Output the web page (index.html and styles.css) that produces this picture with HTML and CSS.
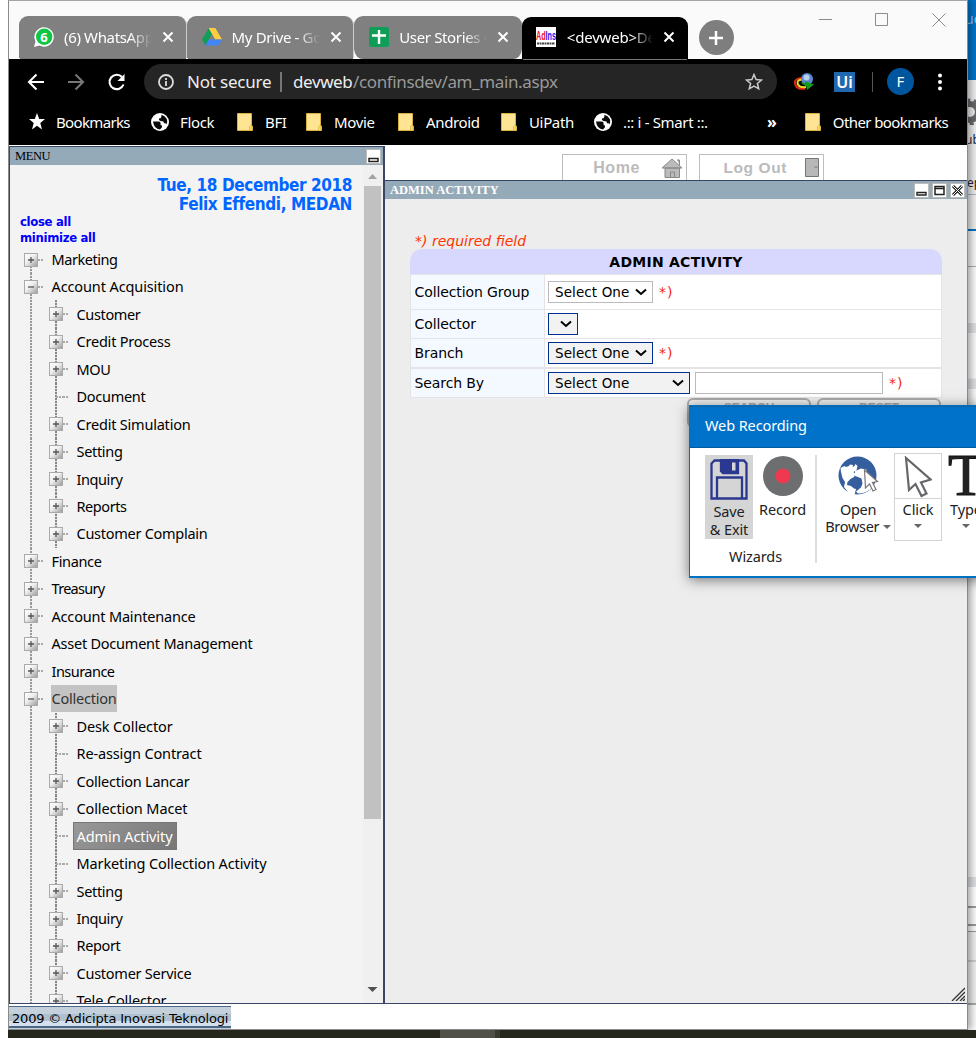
FILE: index.html
```html
<!DOCTYPE html>
<html lang="en">
<head>
<meta charset="utf-8">
<title>Admin Activity</title>
<link rel="stylesheet" href="styles.css">
</head>
<body>
<svg width="0" height="0" class="defs">
  <defs>
    <linearGradient id="box" x1="0" y1="0" x2="1" y2="1"><stop offset="0" stop-color="#fff"/><stop offset=".45" stop-color="#eee"/><stop offset="1" stop-color="#999"/></linearGradient>
    <symbol id="x" viewBox="0 0 12 12"><path d="M1.5 1.5l9 9M10.500 1.500l-9 9" stroke="#fff" stroke-width="2"/></symbol>
    <symbol id="folder" viewBox="0 0 16 18"><path d="M.5 .5h14v12l1 .500v4.500h-15z" fill="#ffe494" stroke="#d9b23c"/><path d="M12.500 17.500v-4q1.500-2 2.500 0v4z" fill="#ffda66" stroke="#d9b23c" stroke-width=".7"/></symbol>
    <symbol id="globe" viewBox="0 0 18 18"><circle cx="9" cy="9" r="9" fill="#fff"/><path d="M2 8.500h5.500q2.500.3 2 2.500-.2 1.500 1.500 1.500v1.800l-2 2.200Q3 16 2 8.500zM10.500 1.800l-.2 2.200q-.5 1.500-2.300 1.500v1.500q1.500 1.500 3.500 1.300 1.500.2 1.500 2h1.500q1 0 1.500 1.200Q17.500 4.500 10.500 1.800z" fill="#0a0a0a"/></symbol>
    <symbol id="chev" viewBox="0 0 12 8"><path d="M1 1.500l5 4.500 5-4.500" fill="none" stroke="#000" stroke-width="2"/></symbol>
    <symbol id="plus" viewBox="0 0 14 14"><rect x=".5" y=".5" width="13" height="13" fill="url(#box)" stroke="#aaa"/><path d="M4 7h6M7 4v6" stroke="#555" stroke-width="1.300"/></symbol>
    <symbol id="minus" viewBox="0 0 14 14"><rect x=".5" y=".5" width="13" height="13" fill="url(#box)" stroke="#aaa"/><path d="M4 7h6" stroke="#555" stroke-width="1.300"/></symbol>
  </defs>
</svg>
<div class="desktop">
  <div class="behind">
    <div class="b-blue">uc</div>
    <div class="b-tools">
      <svg width="26" height="28" viewBox="0 0 26 28"><circle cx="13" cy="15" r="8" fill="none" stroke="#66676c" stroke-width="6"/><circle cx="13" cy="15" r="12" fill="none" stroke="#66676c" stroke-width="3" stroke-dasharray="4 3.500"/></svg>
      <span class="b-t1">ub</span><span class="b-t2">ep</span>
    </div>
    <div class="b-rule"></div><div class="b-blank"></div><div class="b-grey"></div><div class="b-mid"></div><div class="b-grey"></div><div class="b-long"></div><div class="b-grey"></div><div class="b-rows"></div><div class="b-last"></div>
  </div>
  <div class="taskbar"><span></span></div>

  <div class="chrome">
    <div class="tabstrip">
      <div class="tab">
        <svg width="20" height="20" viewBox="0 0 20 20"><path d="M0 20L1.500 14.500A9.700 9.700 0 1 1 5.500 18.500z" fill="#fff"/><circle cx="10.200" cy="9.800" r="8.200" fill="#10c645"/><text x="6.300" y="14.500" class="badge">6</text></svg>
        <span class="title">(6) WhatsApp</span><svg width="12" height="12"><use href="#x"/></svg>
      </div>
      <div class="tab">
        <svg width="20" height="18" viewBox="0 0 20 18"><path d="M6.700 0L0 11.500 3.500 17.500 10 6z" fill="#109d58"/><path d="M6.700 0h6.600L20 11.500h-6.800z" fill="#ffcd40"/><path d="M6.800 11.500H20l-3.500 6h-13z" fill="#4285f4"/></svg>
        <span class="title">My Drive - Go</span><svg width="12" height="12"><use href="#x"/></svg>
      </div>
      <div class="tab last">
        <svg width="20" height="20" viewBox="0 0 20 20"><rect width="20" height="20" rx="2" fill="#109d58"/><path d="M10 3v14M3 8.500h14" stroke="#fff" stroke-width="2.400"/></svg>
        <span class="title">User Stories C</span><svg width="12" height="12"><use href="#x"/></svg>
      </div>
      <div class="tab active">
        <svg width="20" height="20" viewBox="0 0 20 20"><rect width="20" height="20" fill="#fff"/><text x="0" y="13" class="adins" textLength="20" lengthAdjust="spacingAndGlyphs"><tspan fill="#f01020">Ad</tspan><tspan fill="#2020f0">Ins</tspan></text><path d="M1 16.500h18" stroke="#444" stroke-width="2" stroke-dasharray="2 .5"/></svg>
        <span class="title dark">&lt;devweb&gt;De</span><svg width="12" height="12"><use href="#x"/></svg>
      </div>
      <div class="newtab"><svg width="16" height="16"><path d="M8 1v14M1 8h14" stroke="#fff" stroke-width="2.500"/></svg></div>
      <div class="winbtns">
        <svg width="128" height="16" fill="none" stroke="#8c8c8c"><path d="M0 7.500h13M57 1.500h11.500v12H56.500v-12zM113.500 1.500l13 13M126.500 1.500l-13 13"/></svg>
      </div>
    </div>
    <div class="toolbar">
      <svg width="110" height="20" viewBox="0 0 110 20" fill="none" stroke-width="2.100"><path d="M17 10H2M9.500 2.500L2 10l7.500 7.500" stroke="#fff"/><path d="M41 10h15M48.500 2.500L56 10l-7.500 7.500" stroke="#777"/><path d="M95 5A7.200 7.200 0 1 0 96.500 12.500" stroke="#fff"/><path d="M97.500 2v7h-7z" fill="#fff"/></svg>
      <div class="omnibox">
        <svg width="16" height="16" fill="none" stroke="#ddd" stroke-width="1.800"><circle cx="8" cy="8" r="7"/><path d="M8 7v5M8 4v2"/></svg>
        <span class="ns">Not secure</span><i></i><span class="host">devweb</span><span class="path">/confinsdev/am_main.aspx</span>
        <svg class="star" width="18" height="18" viewBox="0 0 18 18"><path d="M9 1.500l2.100 5 5.400.5-4.100 3.500 1.300 5.300L9 13l-4.700 2.800 1.300-5.300L1.500 7l5.400-.5z" fill="none" stroke="#ccc" stroke-width="1.500"/></svg>
      </div>
      <svg class="ext" width="20" height="18" viewBox="0 0 20 18"><path d="M7 5Q-1 6 1.500 12q2 5 10 3.500" fill="none" stroke="#e32518" stroke-width="2"/><path d="M8 6.500Q2 7 4 11.500q2 3.500 8 2.500" fill="none" stroke="#e7de27" stroke-width="2"/><circle cx="13" cy="6" r="6" fill="#5d87d0"/><circle cx="12.500" cy="4.500" r="3" fill="#b8d2ee"/><path d="M6 9.500l5 .5V8l9 3.500-7 5.500-.5-3.500z" fill="#149a1d"/></svg>
      <span class="ui">Ui</span><span class="sep"></span><span class="avatar">F</span>
      <svg class="dots" width="4" height="18"><circle cx="2" cy="2.500" r="2" fill="#fff"/><circle cx="2" cy="9" r="2" fill="#fff"/><circle cx="2" cy="15.500" r="2" fill="#fff"/></svg>
    </div>
    <div class="bookmarks">
      <svg width="18" height="17" viewBox="0 0 18 17"><path d="M9 0l2.200 6H17l-4.700 4 1.700 6.500L9 12.700 4 16.500 5.700 10 1 6h5.800z" fill="#fff"/></svg><span class="w-bm">Bookmarks</span>
      <svg width="18" height="18"><use href="#globe"/></svg><span class="w-fl">Flock</span>
      <svg width="16" height="18"><use href="#folder"/></svg><span class="w-bfi">BFI</span>
      <svg width="16" height="18"><use href="#folder"/></svg><span class="w-mov">Movie</span>
      <svg width="16" height="18"><use href="#folder"/></svg><span class="w-and">Android</span>
      <svg width="16" height="18"><use href="#folder"/></svg><span class="w-uip">UiPath</span>
      <svg width="18" height="18"><use href="#globe"/></svg><span class="w-sm">.:: i - Smart ::.</span>
      <b>»</b><i></i>
      <svg width="16" height="18"><use href="#folder"/></svg><span class="w-oth">Other bookmarks</span>
    </div>

    <div class="page">
      <div class="columns">
        <div class="menu">
          <div class="bar">MENU<svg width="15" height="15"><rect x=".5" y=".5" width="14" height="14" fill="#fff" stroke="#bbb"/><path d="M3 9.500h9v3H3z" fill="none" stroke="#222" stroke-width="1.500"/></svg></div>
          <div class="menu-body">
            <div class="menu-content">
              <div class="who"><span class="date">Tue, 18 December 2018</span><br><span class="user">Felix Effendi, MEDAN</span></div>
              <div class="links"><a>close all</a><br><a>minimize all</a></div>
              <div class="tree" id="tree"></div>
            </div>
            <div class="scroll"><svg width="17" height="17"><path d="M4 11h9L8.500 6z" fill="#a3a3a3"/></svg><div class="thumb"></div><svg width="17" height="17"><path d="M3.500 5h10L8.500 10z" fill="#505050"/></svg></div>
          </div>
        </div>
        <div class="main">
          <div class="top">
            <div class="topbtn home"><span>Home</span><svg width="22" height="20" fill="#bbb" stroke="#888"><path d="M4 10h14.500v9.500H4zM1 10L11 1l10 9zM9.500 19.500v-5.500h4v5.500M16 2h2.500v5"/></svg></div>
            <div class="topbtn out"><span>Log Out</span><svg width="15" height="19" fill="#b8b8b8" stroke="#777"><path d="M.5.5h13v18H.5zM9.500 9h3"/></svg></div>
          </div>
          <div class="panel">
            <div class="bar white">ADMIN ACTIVITY
              <span class="ctl"><svg width="15" height="15"><rect x=".5" y=".5" width="14" height="14" fill="#fff" stroke="#bbb"/><path d="M3 9.500h9v2.500H3z" fill="none" stroke="#222" stroke-width="1.400"/></svg>
              <svg width="15" height="15"><rect x=".5" y=".5" width="14" height="14" fill="#fff" stroke="#bbb"/><path d="M3 3.500h9v8H3zM3 5.500h9" fill="none" stroke="#222" stroke-width="1.500"/></svg>
              <svg width="15" height="15"><rect x=".5" y=".5" width="14" height="14" fill="#fff" stroke="#bbb"/><path d="M3 3l9 9M12 3l-9 9" stroke="#222" stroke-width="3"/><path d="M3 3l9 9M12 3l-9 9" stroke="#fff"/></svg></span>
            </div>
            <div class="panel-body">
              <div class="req">*) required field</div>
              <div class="form">
                <div class="form-head">ADMIN ACTIVITY</div>
                <div class="row r1"><label class="l1">Collection Group</label><div><span class="sel plain">Select One<svg width="12" height="8"><use href="#chev"/></svg></span><em>*)</em></div></div>
                <div class="row r2"><label>Collector</label><div><span class="sel small"><svg width="12" height="8"><use href="#chev"/></svg></span></div></div>
                <div class="row r3"><label>Branch</label><div><span class="sel">Select One<svg width="12" height="8"><use href="#chev"/></svg></span><em>*)</em></div></div>
                <div class="row r4"><label>Search By</label><div><span class="sel wide">Select One<svg width="12" height="8"><use href="#chev"/></svg></span><span class="input"></span><em>*)</em></div></div>
              </div>
              <div class="actions"><span>SEARCH</span><span>RESET</span></div>
              <svg class="grip" width="14" height="14" stroke="#333" stroke-width="1.300"><path d="M1 14L14 1M5 14l9-9M9 14l5-5M12 14l2-2"/></svg>
            </div>
          </div>
        </div>
      </div>
      <div class="footer"><span>2009 © Adicipta Inovasi Teknologi</span></div>
    </div>
  </div>

  <div class="rec">
    <div class="rec-title">Web Recording</div>
    <div class="rec-body">
      <div class="wiz">
        <div class="wiz-tools">
          <div class="tool save"><svg width="38" height="41" viewBox="0 0 38 41" fill="none" stroke="#2b388f" stroke-width="2.300"><path d="M1.500 4.500l3-3H34l2.500 3v35h-35z"/><path d="M11 1h17v13H13l-2-2z" fill="#2b388f"/><path d="M7 39V18.500h25V39"/><path d="M22 3.500h3.500v8H22z" fill="#d5d5d5" stroke="none"/></svg><span>Save<br>&amp; Exit</span></div>
          <div class="tool record"><svg width="40" height="40"><circle cx="20" cy="20" r="20" fill="#6d6e70"/><circle cx="20" cy="20" r="7.500" fill="#ee3950"/></svg><span>Record</span></div>
        </div>
        <div class="wiz-label">Wizards</div>
      </div>
      <div class="tool open"><svg width="42" height="40" viewBox="0 0 42 40"><circle cx="19.500" cy="19.500" r="19" fill="#355e9e"/><path d="M2.500 12l4-2 1.500 1 3-1 1-1.500 3 .5-.5 2 2-1 1-2 2 2-1 4-3 2 2 2-1.500 3-3.500 2-3 3-.5 3 4 1 3 2.500 2 .500-1 4-1.500 4Q9 36 6 31l1-5-2.500-4-1.500-6zM17 15l6-2.500 5 1 4 8-2 5 4 5q-5 6-14 6l-2-2 5-4 1.500-4-1-5-3.500-1.500-3-1z" fill="#fff"/><path d="M26.500 14l13 11.500-5 1 3.500 7-3 1.500-3.500-7-4 4z" fill="#fff" stroke="#777" stroke-width="1.200"/></svg><span>Open<br>Browser <u></u></span></div>
      <div class="tool click"><svg width="28" height="42" viewBox="0 0 28 42"><path d="M2 2l3 32 6.500-6 6 12 5-2.500-5.500-11 9.500-3z" fill="#fff" stroke="#66676b" stroke-width="2.200"/></svg><hr><span>Click</span><u></u></div>
      <div class="tool type"><b>T</b><span>Type</span><u></u></div>
    </div>
  </div>
</div>
<script src="tree.js"></script>
</body>
</html>
```
FILE: tree.js
```js
// [depth, label, width, kind]: "+" collapsed, "-" expanded, "" leaf
var items = [
  [0,"Marketing",66,"+"],[0,"Account Acquisition",132,"-"],[1,"Customer",64,"+"],[1,"Credit Process",94,"+"],
  [1,"MOU",34,"+"],[1,"Document",69,""],[1,"Credit Simulation",114,"+"],[1,"Setting",46,"+"],[1,"Inquiry",46,"+"],
  [1,"Reports",50,"+"],[1,"Customer Complain",131,"+"],[0,"Finance",50,"+"],[0,"Treasury",53,"+"],
  [0,"Account Maintenance",144,"+"],[0,"Asset Document Management",201,"+"],[0,"Insurance",63,"+"],
  [0,"Collection",65,"-","hover"],[1,"Desk Collector",96,"+"],[1,"Re-assign Contract",125,""],
  [1,"Collection Lancar",113,"+"],[1,"Collection Macet",111,"+"],[1,"Admin Activity",96,"","selected"],
  [1,"Marketing Collection Activity",190,""],[1,"Setting",46,"+"],[1,"Inquiry",46,"+"],[1,"Report",44,"+"],
  [1,"Customer Service",115,"+"],[1,"Tele Collector",90,"+"]
];
document.getElementById("tree").innerHTML = items.map(function (it, i) {
  var icon = it[3] ? '<svg width="14" height="14"><use href="#' + (it[3] === "+" ? "plus" : "minus") + '"/></svg>' : "<i></i>";
  return '<div class="node d' + it[0] + (i === 0 ? " first" : "") + '">' + (it[0] ? '<span class="rail"></span>' : "") +
    '<span class="knob">' + icon + '</span><span class="dash"></span><span class="label ' + (it[4] || "") +
    '" data-w="' + it[2] + '"><s>' + it[1] + "</s></span></div>";
}).join("");
document.querySelectorAll("[data-w]").forEach(function (el) {
  var s = el.firstChild, n = s.textContent.length;
  s.style.letterSpacing = ((+el.dataset.w - s.getBoundingClientRect().width) / n).toFixed(3) + "px";
});
```
FILE: styles.css
```css
*{box-sizing:border-box}
body{margin:0;background:#fff;font-family:"Noto Sans","Open Sans",sans-serif;overflow:hidden}
svg{display:block;flex:none}
.defs{position:absolute}
.desktop{position:relative;width:976px;height:1038px;overflow:hidden;background:#fff}
.behind{position:absolute;left:966px;top:0;width:10px;height:1030px;background:#fff;display:flex;flex-direction:column;overflow:hidden}
.b-blue{height:80px;background:#0072c6;color:#8fbfe8;font-size:14px;padding-top:9px;flex:none;text-indent:-1px}
.b-tools{height:115px;background:#eee;flex:none;position:relative;font-size:12px;color:#223;border-bottom:1px solid #aab4c4}
.b-tools svg{position:absolute;left:-9px;top:17px}
.b-t1{position:absolute;left:-1px;top:51px}.b-t2{position:absolute;left:1px;top:94px}
.b-rule{height:36px;background:#eee;border-bottom:2px solid #0072c6;flex:none}
.b-blank{height:92px;flex:none;background:linear-gradient(#aab 0 1px,#fafafa 1px) 0 35px/100% 60px no-repeat #f7f7f7}
.b-grey{height:10px;background:#dcdfe2;flex:none}
.b-mid{height:46px;background:#fafafa;flex:none;border-bottom:1px solid #eee}
.b-long{height:488px;background:#fafafa;flex:none}
.b-rows{height:45px;background:#fafafa;border-bottom:1px solid #999;flex:none;background:linear-gradient(#999 0 2px,#fafafa 2px 18px,#999 18px 20px,#fafafa 20px) 0 19px no-repeat}
.b-last{flex:1;background:linear-gradient(#eee 0 28px,#ccc 28px 30px,#eee 30px 71px,#aaa 71px 73px,#fafafa 73px)}
.taskbar{position:absolute;left:8px;top:1030px;width:968px;height:8px;background:#26271c;padding-left:432px}
.taskbar span{display:block;width:60px;height:8px;background:#505049;border-right:5px solid #3a3a32}
.chrome{position:absolute;left:8px;top:0;width:960px;height:1030px;border:1px solid #8a8a8a;border-top-color:#a5a5a5;background:#000;box-shadow:3px 0 7px rgba(0,0,0,.35);clip-path:inset(0 -9px 0 0);display:flex;flex-direction:column}
.tabstrip{height:58px;background:#fafafa;flex:none;display:flex;align-items:flex-start;padding:15px 0 0 10px;position:relative}
.tab{width:167.600px;height:42px;background:#808080;border-radius:9px 9px 0 0;display:flex;align-items:center;padding:0 0 0 15px;border-right:1px solid #ccc;flex:none;box-shadow:0 2px 0 -1px #777}
.tab>svg:last-child{margin-left:10px}
.tab.last{border-right:0;border-radius:9px}
.title{width:88px;margin-left:10px;font-size:15px;letter-spacing:-.35px;white-space:nowrap;overflow:hidden;-webkit-mask-image:linear-gradient(90deg,#000 75%,transparent);mask-image:linear-gradient(90deg,#000 75%,transparent);color:#fff}
.tab.active{background:#000;width:166px;height:42px;margin-top:1px;border:0;padding:0 0 2px 14.500px}
.tab.active .title{letter-spacing:-.2px;margin-left:10.500px;width:86px}
.badge{font:bold 13px "Noto Sans",sans-serif;fill:#fff}
.adins{font:bold 13px "Liberation Sans",sans-serif}
.newtab{width:35px;height:35px;border-radius:50%;background:#7e7e7e;margin:4px 0 0 11px;display:flex;align-items:center;justify-content:center}
.winbtns{margin:-4px 0 0 85px}
.toolbar{height:45px;background:#000;flex:none;display:flex;align-items:center;padding-left:18px;border-top:0}
.toolbar>svg:first-child{width:110px}
.omnibox{width:633px;height:35px;margin-left:7px;border-radius:18px;background:#252525;display:flex;align-items:center;padding:0 14px;font-size:17px;color:#eee;white-space:nowrap;flex:none}
.ns{margin-left:13px;letter-spacing:-.2px;width:83px}.omnibox i{width:2px;height:20px;background:#777;margin:0 11px 0 10px}
.host{width:60px;letter-spacing:-.4px}.path{color:#999;letter-spacing:-.37px}.star{margin-left:auto}
.ext{margin-left:17px}.ui{margin-left:20px;width:21px;height:20px;background:#2068b0;color:#fff;font:600 16px/20px "Noto Sans",sans-serif;text-align:center}
.sep{width:1px;height:20px;background:#555;margin:0 14px 0 17px}.avatar{width:27px;height:27px;border-radius:50%;background:#00559f;color:#fff;font-size:15px;line-height:27px;text-align:center}
.dots{margin-left:24px}
.bookmarks{height:41px;background:#000;flex:none;color:#fff;font-size:15px;display:flex;align-items:center;padding:0 0 5px 19px;white-space:nowrap}
.bookmarks svg,.bookmarks span,.bookmarks b,.bookmarks i{margin-top:-1px!important}
.bookmarks span{margin:0 20px 0 11px;flex:none;letter-spacing:-.35px}
.bookmarks b{margin-left:40px;font-size:16px;line-height:18px;width:10px}.bookmarks i{width:1px;height:20px;background:#555;margin:0 15px 0 13px}
.bookmarks .w-bm{width:73px;margin-left:10px;margin-right:22px;letter-spacing:-.65px}.bookmarks .w-fl{width:35px;margin-right:22px}.bookmarks .w-bfi{width:21px;margin-left:12px}.bookmarks .w-mov{width:42px;margin-left:12px;margin-right:22px}.bookmarks .w-and{width:54px;margin-left:12px;margin-right:21px}.bookmarks .w-uip{width:44px;margin-left:12px;margin-right:21px}.bookmarks .w-sm{width:84px;margin-right:20px}.bookmarks .w-oth{margin-left:12px;letter-spacing:-.6px}
.page{flex:1;background:#fff;display:flex;flex-direction:column;padding-top:1px;min-height:0}
.columns{display:flex;height:858px;flex:none}
.menu{width:376px;border:1px solid #3b4565;border-right-width:2px;border-left:1px solid #3b4565;display:flex;flex-direction:column;overflow:hidden}
.bar{height:18px;background:#95aab8;font:12.5px/17px "Liberation Serif",serif;display:flex;justify-content:space-between;align-items:center;padding:0 2px 0 5px;flex:none;color:#000;letter-spacing:-.4px}
.menu-body{flex:1;display:flex;background:#f3f3f3;min-height:0}
.menu-content{flex:1;overflow:hidden}
.who{text-align:right;padding:11px 11px 0 0;font:bold 17px/19px "DejaVu Sans Condensed","DejaVu Sans",sans-serif;color:#06f;letter-spacing:-.4px}
.links{padding:0 0 0 10px;font:bold 13px/16px "DejaVu Sans Condensed",sans-serif;color:#00f;letter-spacing:-.33px}
.scroll{width:20px;background:#f0f0f0;display:flex;flex-direction:column;padding:3px 2px 4px 1px}
.thumb{width:17px;height:633px;background:#c1c1c1;margin-top:1px;margin-bottom:auto;flex:none}
.node{height:27.480px;display:flex;align-items:center;padding-left:14px;background:repeating-linear-gradient(#999 0 2px,#eee 2px 3px) 20px 0/2px 100% no-repeat}
.node.first{background-position:20px 14px;height:27px}
.rail{align-self:stretch;width:25px;background:repeating-linear-gradient(#888 0 2px,#ddd 2px 3px) 100% 0/2px 100% no-repeat;margin-right:-8px;margin-left:8px}
.knob{width:14px;position:relative}
.knob i{display:block;width:7px;height:2px;margin-left:7px;background:repeating-linear-gradient(90deg,#aaa 0 2px,transparent 2px 3px)}
.dash{width:6px;height:2px;background:repeating-linear-gradient(90deg,#aaa 0 2px,transparent 2px 3px)}
.label{margin-left:6.500px;padding:0 0 0 1px;height:27px;line-height:27px;font-size:14.500px;white-space:nowrap;color:#000}
.d1 .label{margin-left:3.500px;padding:0 4px}
.label s{text-decoration:none}
.hover{background:#c3c3c3;color:#333!important;padding-right:0}
.label.selected{background:linear-gradient(135deg,#999,#777);color:#fff;height:28px;border:1px solid #777;line-height:26px;padding:0 3px!important}
.main{flex:1;display:flex;flex-direction:column;min-width:0}
.top{height:34px;background:#fff;display:flex;padding:8px 0 0 177px;flex:none}
.topbtn{width:125px;border:1px solid #bdbdbd;border-bottom:0;height:26px;display:flex;align-items:center;justify-content:flex-end;padding-right:3px;font:bold 16px "Liberation Sans",sans-serif;color:#bbb;letter-spacing:.6px}
.home{margin-right:12px}.home span{margin-right:21px}.out span{margin-right:18px;font-size:15.500px}
.panel{flex:1;border:1px solid #3b4565;border-left:0;border-right:0;display:flex;flex-direction:column}
.bar.white{color:#fff;font-weight:bold;font-size:12.500px;letter-spacing:0}
.ctl{display:flex;gap:3px}
.panel-body{flex:1;background:#ededed;padding:34px 25px 0;position:relative}
.req{font:italic 14px/16px "DejaVu Sans",sans-serif;color:#f30;padding-left:5px;letter-spacing:0}
.form{width:532px;font:14px "DejaVu Sans",sans-serif}
.form-head{height:25px;background:#d8d8ff;border-radius:12px 12px 0 0;text-align:center;font-weight:bold;line-height:26px;font-size:14px;letter-spacing:.25px}
.row{display:grid;grid-template-columns:134px 1fr;border:1px solid #e6e3e6;border-top:0;background:#fff}
.r1{height:36px;border-top:1px solid #e6e3e6}.r2{height:29px}.r3{height:30px;border-bottom-width:2px}.r4{height:29px}
.row label{background:#f4f9ff;display:flex;align-items:center;padding-left:3.500px;border-right:1px solid #e6e3e6;font-size:14px;letter-spacing:-.1px}
.row>div{display:flex;align-items:center;padding-left:3px}
.sel{width:105px;height:22px;border:1px solid #003090;background:#f2f2f2;display:flex;align-items:center;justify-content:space-between;padding:0 5px 0 6px;font-size:13.500px;letter-spacing:.1px}
.sel.plain{border-color:#bbb;background:#fff}.sel.small{width:30px;padding-left:11px}.sel.wide{width:142px}
.input{width:188px;height:22px;border:1px solid #bbb;background:#fff;margin-left:5px}
.row em{font-style:normal;color:#f32a10;margin-left:6px;font-size:14px;letter-spacing:1px}
.actions{display:flex;gap:6px;padding-left:277px;margin-top:0}
.actions span{width:124px;height:30px;border:2px solid #aaa;border-radius:6px;background:#eee;font:bold 12px/17px "Liberation Sans",sans-serif;text-align:center;color:#aaa}
.grip{position:absolute;right:2px;bottom:2px}
.footer{padding-top:2px}
.footer span{display:block;width:222px;height:23px;background:linear-gradient(#4b6788 0 1px,#c4d0dc 1px 8px,#afc0cf 8px 15px,#d4e0ee 15px 20px,#4b6788 20px 22px,#c4d0dc 22px);font:13px/25px "DejaVu Sans",sans-serif;padding-left:3px;white-space:nowrap;letter-spacing:-.18px}
.rec{position:absolute;left:689px;top:405px;width:310px;height:173px;border:1px solid #0072c6;border-bottom-width:2px;background:#fff;box-shadow:0 2px 12px rgba(0,0,0,.5)}
.rec-title{height:42px;background:#0072c9;color:#fff;font-size:14.500px;line-height:37px;padding-left:15px;border-top:1px solid #1562a2;border-bottom:1px solid #005a9e;letter-spacing:-.1px}
.rec-body{display:flex;color:#222;font-size:14.500px;line-height:18px;letter-spacing:-.1px}
.wiz{width:127px;height:108px;margin-top:7px;border-right:2px solid #dcdfe1}
.wiz-tools{display:flex;padding-left:15px}.wiz-label{padding:8px 0 0 39px}
.tool{display:flex;flex-direction:column;align-items:center;text-align:center;flex:none;position:relative}
.save{width:48px;height:84px;background:#d5d5d5;padding-top:4px}.save span{margin-top:2px}
.record{width:59px;padding-top:1px}.record span{margin-top:4px}
.open{width:76px;margin:8px 0 0 3px;line-height:17px;white-space:nowrap}.open svg{margin-left:2px}.open span{margin-top:5px;letter-spacing:-.3px}
.tool u{display:inline-block;border:4px solid transparent;border-top-color:#666;border-bottom:0;vertical-align:3px}
.click{width:48px;height:88px;border:1px solid #d4d4d4;margin:5px 0 0 -2px;padding-top:2px}.click hr{width:100%;margin:0;border:0;border-top:1px solid #d4d4d4}.click span{margin-top:1px}.click u{margin-top:6px}
.type{width:48px;margin:6px 0 0 0}.type b{font:59px/43px "Liberation Serif",serif;height:45px;-webkit-text-stroke:1px #111}.type span{margin-top:1px}.type u{margin-top:6px}
```
